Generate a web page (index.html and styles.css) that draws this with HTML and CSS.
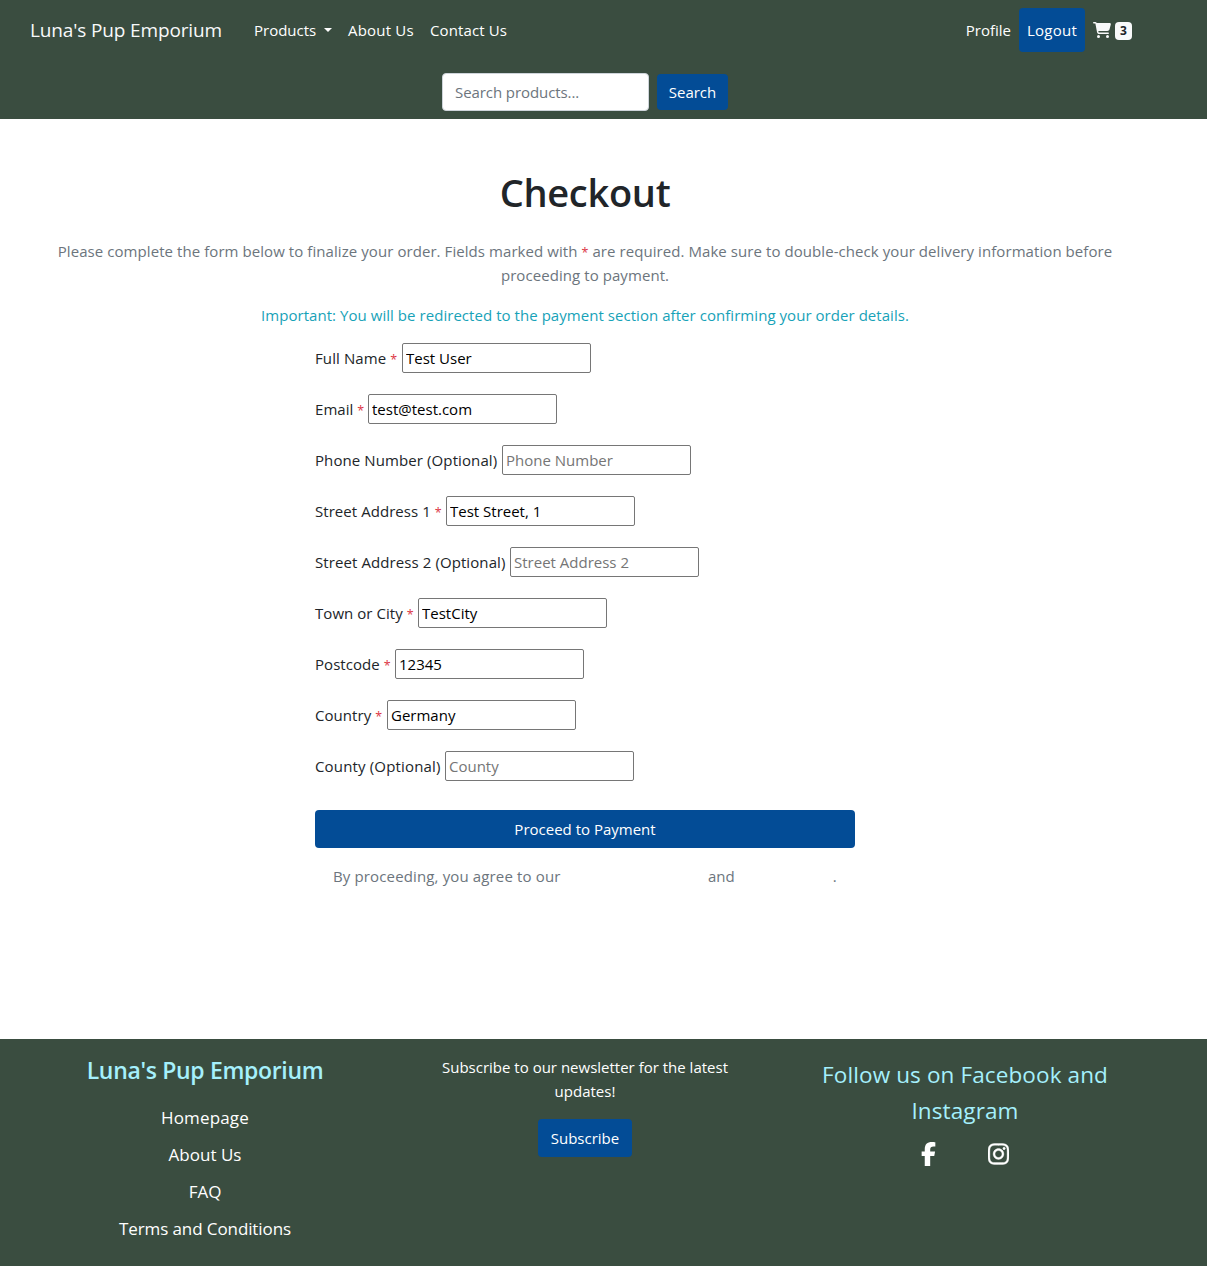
FILE: index.html
```html
<!DOCTYPE html>
<html lang="en">
<head>
<meta charset="utf-8">
<title>Checkout - Luna's Pup Emporium</title>
<link rel="stylesheet" href="styles.css">
</head>
<body>
<header class="site-header">
  <nav class="nav-row">
    <a class="brand">Luna's Pup Emporium</a>
    <a class="nav-link products">Products<span class="caret"></span></a>
    <a class="nav-link about">About Us</a>
    <a class="nav-link contact">Contact Us</a>
    <div class="nav-end">
      <a class="nav-link profile">Profile</a>
      <a class="logout">Logout</a>
      <a class="cart"><svg class="cart-icon" viewBox="0 0 576 512"><path d="M0 24C0 10.7 10.7 0 24 0H69.500c22 0 41.500 12.800 50.600 32h411c26.300 0 45.500 25 38.600 50.400l-41 152.300c-8.500 31.400-37 53.300-69.500 53.300H170.700l5.400 28.500c2.200 11.300 12.100 19.500 23.600 19.500H488c13.300 0 24 10.700 24 24s-10.700 24-24 24H199.700c-34.600 0-64.300-24.600-70.700-58.500L77.400 54.500c-.7-3.800-4-6.500-7.900-6.500H24C10.700 48 0 37.300 0 24zM128 464a48 48 0 1 1 96 0 48 48 0 1 1-96 0zm336-48a48 48 0 1 1 0 96 48 48 0 1 1 0-96z"/></svg><span class="badge">3</span></a>
    </div>
  </nav>
  <form class="search-row">
    <input class="search-input" type="text" placeholder="Search products...">
    <button class="btn search-btn" type="button">Search</button>
  </form>
</header>
<main class="checkout">
  <h1 class="title">Checkout</h1>
  <p class="intro">Please complete the form below to finalize your order. Fields marked with <span class="req">*</span> are required. Make sure to double-check your delivery information before<br>proceeding to payment.</p>
  <p class="important">Important: You will be redirected to the payment section after confirming your order details.</p>
  <form class="order-form">
    <div class="field"><label class="l-name">Full Name <span class="req">*</span></label><input type="text" value="Test User"></div>
    <div class="field"><label class="l-email">Email <span class="req">*</span></label><input type="text" value="test@test.com"></div>
    <div class="field"><label class="l-phone">Phone Number (Optional)</label><input type="text" placeholder="Phone Number"></div>
    <div class="field"><label class="l-street1">Street Address 1 <span class="req">*</span></label><input type="text" value="Test Street, 1"></div>
    <div class="field"><label class="l-street2">Street Address 2 (Optional)</label><input type="text" placeholder="Street Address 2"></div>
    <div class="field"><label class="l-town">Town or City <span class="req">*</span></label><input type="text" value="TestCity"></div>
    <div class="field"><label class="l-post">Postcode <span class="req">*</span></label><input type="text" value="12345"></div>
    <div class="field"><label class="l-country">Country <span class="req">*</span></label><input type="text" value="Germany"></div>
    <div class="field"><label class="l-county">County (Optional)</label><input type="text" placeholder="County"></div>
    <button class="btn proceed" type="button">Proceed to Payment</button>
    <p class="agree"><span class="agree-text">By proceeding, you agree to our</span><a class="terms-link"></a><span>and</span><a class="privacy-link"></a><span>.</span></p>
  </form>
</main>
<footer class="site-footer">
  <div class="footer-cols">
    <section class="footer-col">
      <h2 class="footer-brand">Luna's Pup Emporium</h2>
      <ul class="footer-links">
        <li class="f-home">Homepage</li>
        <li class="f-about">About Us</li>
        <li class="f-faq">FAQ</li>
        <li class="f-terms">Terms and Conditions</li>
      </ul>
    </section>
    <section class="footer-col">
      <p class="newsletter">Subscribe to our newsletter for the latest<br>updates!</p>
      <button class="btn subscribe" type="button">Subscribe</button>
    </section>
    <section class="footer-col">
      <p class="follow">Follow us on Facebook and<br>Instagram</p>
      <div class="social">
        <svg class="fb" viewBox="0 0 320 512"><path d="M80 299.300V512H196V299.300h86.500l18-97.800H196V166.900c0-51.700 20.300-71.500 72.700-71.500c16.300 0 29.400 .4 37 1.200V7.900C291.400 4 256.400 0 236.200 0C129.300 0 80 50.500 80 159.400v42.100H14v97.800H80z"/></svg>
        <svg class="ig" viewBox="0 0 448 512"><path d="M224.100 141c-63.600 0-114.900 51.300-114.900 114.900s51.300 114.900 114.900 114.900S339 319.500 339 255.900 287.700 141 224.100 141zm0 189.600c-41.100 0-74.700-33.500-74.700-74.700s33.500-74.700 74.700-74.700 74.700 33.500 74.700 74.700-33.600 74.700-74.700 74.700zm146.400-194.300c0 14.900-12 26.800-26.800 26.800-14.900 0-26.800-12-26.800-26.800s12-26.800 26.800-26.800 26.800 12 26.800 26.800zm76.100 27.200c-1.700-35.900-9.900-67.700-36.200-93.900-26.200-26.200-58-34.400-93.900-36.200-37-2.100-147.900-2.100-184.900 0-35.800 1.700-67.600 9.900-93.900 36.100s-34.400 58-36.200 93.900c-2.100 37-2.100 147.900 0 184.900 1.700 35.900 9.900 67.700 36.200 93.900s58 34.400 93.900 36.200c37 2.100 147.900 2.100 184.900 0 35.900-1.700 67.700-9.900 93.900-36.200 26.200-26.200 34.400-58 36.200-93.900 2.100-37 2.100-147.800 0-184.800zM398.800 388c-7.800 19.600-22.900 34.700-42.600 42.600-29.500 11.700-99.500 9-132.100 9s-102.700 2.600-132.100-9c-19.600-7.800-34.700-22.900-42.600-42.600-11.700-29.500-9-99.500-9-132.100s-2.600-102.700 9-132.100c7.800-19.600 22.900-34.700 42.600-42.600 29.500-11.700 99.500-9 132.100-9s102.700-2.600 132.100 9c19.600 7.800 34.700 22.900 42.600 42.600 11.700 29.500 9 99.500 9 132.100s2.700 102.700-9 132.100z"/></svg>
      </div>
    </section>
  </div>
</footer>
</body>
</html>
```
FILE: styles.css
```css
* { box-sizing: border-box; }
body {
  margin: 0;
  min-height: 1266px;
  display: flex;
  flex-direction: column;
  background: #fff;
  color: #212529;
  font: 15px/24px "Open Sans", "Noto Sans", sans-serif;
}
p, h1, h2, ul { margin: 0; padding: 0; }
input, button { font: inherit; letter-spacing: inherit; }
a, label, p, h1, h2, li, button { white-space: nowrap; }

.site-header { height: 119px; padding: 8px 75px 8px 30px; background: #3a4d40; color: #f8f9fa; }
.nav-row { display: flex; align-items: center; height: 44px; gap: 16px; }
.brand { width: 208px; font-size: 19px; letter-spacing: -0.14px; }
.nav-link { color: #fff; }
.products { display: flex; align-items: center; width: 78px; }
.about { width: 66px; letter-spacing: 0.2px; }
.contact { letter-spacing: 0.12px; }
.caret { margin-left: auto; border: 4.800px solid transparent; border-top-color: currentColor; border-bottom: 0; }
.nav-end { display: flex; align-items: center; gap: 8px; margin-left: auto; }
.logout { width: 66px; height: 44px; line-height: 44px; text-align: center; background: #034c96; border-radius: 4px; color: #fff; letter-spacing: 0.25px; }
.cart { display: flex; align-items: center; gap: 4px; }
.cart-icon { width: 18px; height: 16px; fill: #f8f9fa; }
.badge { width: 17px; height: 18px; margin-top: 2px; border-radius: 4px; background: #f8f9fa; color: #212529; font-size: 12px; font-weight: 700; line-height: 18px; text-align: center; }
.search-row { display: flex; align-items: center; justify-content: center; gap: 8px; width: 1110px; margin-top: 21px; }
.search-input { width: 207px; height: 38px; padding: 0 12px; border: 1px solid #ced4da; border-radius: 4px; background: #fff; letter-spacing: -0.08px; }
.search-input::placeholder { color: #6c757d; opacity: 1; }
.btn { border: 0; border-radius: 4px; padding: 0; background: #034c96; color: #fff; text-align: center; }
.search-btn { width: 71px; height: 36px; }

.checkout { width: 1170px; height: 920px; padding-top: 49px; text-align: center; }
.title { font-size: 38px; font-weight: 600; line-height: 48px; letter-spacing: -0.3px; }
.intro { margin-top: 23px; color: #6c757d; letter-spacing: 0.07px; }
.req { color: #dc3545; font-size: 12.500px; line-height: 1; }
.important { margin-top: 16px; color: #17a2b8; letter-spacing: 0.05px; }
.order-form { width: 540px; margin: 16px auto 0; text-align: left; }
.field { display: flex; align-items: center; gap: 4px; height: 30px; margin-bottom: 21px; }
.field label { flex: none; letter-spacing: 0.05px; }
.field input { width: 189px; height: 30px; padding: 1px 3px; border: 1px solid #767676; border-radius: 2px; color: #000; }
.field input::placeholder { color: #757575; }
.field .l-name { width: 83px; letter-spacing: 0.1px; }
.field .l-email { width: 49px; }
.field .l-phone { width: 183px; letter-spacing: 0.1px; }
.field .l-street1 { width: 127px; }
.field .l-street2 { width: 191px; letter-spacing: 0.09px; }
.field .l-town { width: 99px; }
.field .l-post { width: 76px; }
.field .l-country { width: 68px; }
.field .l-county { width: 126px; letter-spacing: 0.16px; }
.proceed { display: block; width: 100%; height: 38px; margin-top: 29px; }
.agree { display: flex; padding-left: 18px; margin-top: 16px; color: #6c757d; }
.agree-text { width: 228px; letter-spacing: 0.14px; }
.terms-link { width: 147px; }
.privacy-link { width: 98px; }

.site-footer { flex: 1; padding: 16px 52px 0 15px; background: #3a4d40; color: #fff; }
.footer-cols { display: grid; grid-template-columns: repeat(3, 380px); text-align: center; }
.footer-brand { color: #a5f0fc; font-size: 23px; font-weight: 600; line-height: 30px; letter-spacing: -0.33px; }
.footer-links { list-style: none; margin-top: 19px; font-size: 17px; line-height: 27px; }
.footer-links li { margin-bottom: 10px; }
.f-home { letter-spacing: 0.15px; }
.f-terms { letter-spacing: -0.1px; }
.subscribe { width: 94px; height: 38px; margin-top: 16px; }
.follow { margin-top: 2px; color: #a5f0fc; font-size: 22.500px; line-height: 36px; letter-spacing: 0.12px; }
.social { display: flex; justify-content: center; gap: 52px; margin-top: 13px; }
.social svg { height: 24px; fill: #fff; }
.fb { width: 15px; }
.ig { width: 21px; stroke: #fff; stroke-width: 8px; }
```
